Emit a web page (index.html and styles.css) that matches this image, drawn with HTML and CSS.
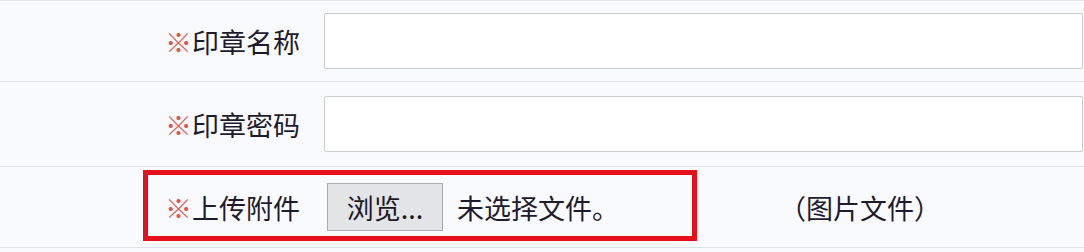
FILE: index.html
```html
<!DOCTYPE html>
<html lang="zh-CN">
<head>
  <meta charset="UTF-8">
  <title>印章信息</title>
  <link rel="stylesheet" href="styles.css">
</head>
<body>
  <div class="form">
    <div class="row row-name">
      <label class="label"><span class="req">※</span>印章名称</label>
      <input class="field" type="text">
    </div>
    <div class="row row-pwd">
      <label class="label"><span class="req">※</span>印章密码</label>
      <input class="field" type="password">
    </div>
    <div class="row row-file">
      <label class="label"><span class="req">※</span>上传附件</label>
      <button class="browse">浏览...</button>
      <span class="file-name">未选择文件。</span>
      <span class="hint">（图片文件）</span>
      <div class="mark"></div>
    </div>
  </div>
</body>
</html>
```

FILE: styles.css
```css
* { box-sizing: border-box; margin: 0; padding: 0; }
body { background: #f9fafd; font-family: "Noto Sans CJK SC", "Noto Sans", sans-serif; color: #1f1b2e; font-size: 27px; }
.form { border-top: 1px solid #e3e6ec; }
.row { display: flex; align-items: center; border-bottom: 1px solid #dde1e8; position: relative; }
.row-name { height: 81px; }
.row-pwd { height: 85px; }
.row-file { height: 81px; }
.label { width: 300px; text-align: right; margin-right: 24px; line-height: 1; }
.req { color: #e2524c; }
.field { width: 759px; height: 56px; background: #fff; border: 1px solid #c9cbd0; border-radius: 2px; font-size: 20px; }
.browse { margin-left: 3px; width: 116px; height: 48px; background: #e3e4e6; border: 1px solid #a9abb0; font-family: inherit; font-size: 27px; color: #1a1822; line-height: 1; }
.file-name { margin-left: 14px; line-height: 1; }
.hint { margin-left: 160px; line-height: 1; }
.mark { position: absolute; left: 143px; top: 3px; width: 554px; height: 71px; border: 5px solid #e5101a; pointer-events: none; }
```
